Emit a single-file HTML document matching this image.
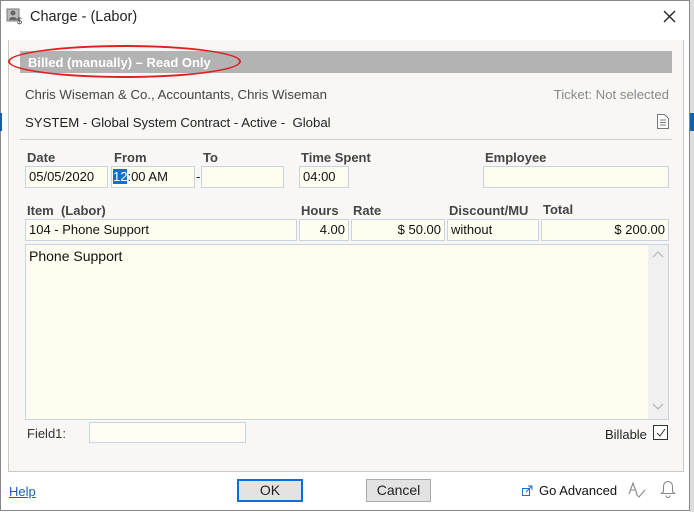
<!DOCTYPE html>
<html><head><style>
*{box-sizing:border-box;margin:0;padding:0}
body{width:694px;height:512px;overflow:hidden;background:#fff;font-family:"Liberation Sans",Arial,sans-serif;font-size:13px;color:#222;position:relative}
.a{position:absolute}
.win{left:0;top:0;width:690px;height:511px;border:1px solid #888;background:#fff}
.panel{left:8px;top:40px;width:676px;height:432px;background:#f8f7f6;border:1px solid #c8c8c8;border-top:none}
.lbl{font-weight:bold;color:#444;font-size:13px}
.in{background:#fefef0;border:1px solid #c9d3df;height:22px;line-height:20px;padding:0 3px;font-size:13px;color:#111;white-space:nowrap}
.r{text-align:right}
</style></head><body>
<div class="a" style="left:690px;top:0;width:4px;height:512px;background:#ddd"></div>
<div class="a" style="left:690px;top:113px;width:4px;height:18px;background:#1060b0"></div>
<div class="a win"></div>
<div class="a" style="left:0;top:113px;width:2px;height:18px;background:#1060b0"></div>
<svg class="a" style="left:6px;top:8px" width="17" height="17" viewBox="0 0 17 17"><rect x="1" y="1" width="12" height="12" fill="#bbb" stroke="#777"/><circle cx="7" cy="5" r="2.5" fill="#666"/><path d="M3 12c0-4 8-4 8 0z" fill="#666"/><text x="11" y="16" font-size="9" fill="#444" font-family="Liberation Sans">$</text></svg>
<div class="a" style="left:30px;top:9px;font-size:14.5px;color:#222">Charge - (Labor)</div>
<svg class="a" style="left:663px;top:10px" width="13" height="13"><path d="M1 1L12 12M12 1L1 12" stroke="#222" stroke-width="1.3"/></svg>
<div class="a panel"></div>
<div class="a" style="left:20px;top:51px;width:652px;height:22px;background:#b3b3b3;color:#fff;font-weight:bold;padding:4px 8px;font-size:13px">Billed (manually) – Read Only</div>
<div class="a" style="left:8px;top:45px;width:233px;height:33px;border:2px solid #e02020;border-radius:50%"></div>
<div class="a" style="left:25px;top:87px;color:#444;font-size:13.2px">Chris Wiseman &amp; Co., Accountants, Chris Wiseman</div>
<div class="a" style="right:25px;top:87px;color:#888;font-size:13.2px">Ticket: Not selected</div>
<div class="a" style="left:25px;top:115px;color:#222;font-size:13.2px">SYSTEM - Global System Contract - Active -&nbsp; Global</div>
<svg class="a" style="left:657px;top:114px" width="12" height="15"><path d="M.5 .5h7l4 4v10h-11z" fill="#fff" stroke="#777"/><path d="M3 6h6M3 8.5h6M3 11h6" stroke="#777"/></svg>
<div class="a" style="left:20px;top:139px;width:652px;height:1px;background:#ccc"></div>
<div class="a lbl" style="left:27px;top:150px">Date</div>
<div class="a lbl" style="left:114px;top:150px">From</div>
<div class="a lbl" style="left:203px;top:150px">To</div>
<div class="a lbl" style="left:301px;top:150px">Time Spent</div>
<div class="a lbl" style="left:485px;top:150px">Employee</div>
<div class="a in" style="left:25px;top:166px;width:83px">05/05/2020</div>
<div class="a in" style="left:111px;top:166px;width:84px;padding-left:1px"><span style="background:#0a6fd6;color:#fff">12</span>:00 AM</div>
<div class="a" style="left:196px;top:169px">-</div>
<div class="a in" style="left:201px;top:166px;width:83px"></div>
<div class="a in" style="left:299px;top:166px;width:50px">04:00</div>
<div class="a in" style="left:483px;top:166px;width:186px"></div>
<div class="a lbl" style="left:27px;top:203px">Item&nbsp; (Labor)</div>
<div class="a lbl" style="left:301px;top:203px">Hours</div>
<div class="a lbl" style="left:353px;top:203px">Rate</div>
<div class="a lbl" style="left:449px;top:203px">Discount/MU</div>
<div class="a lbl" style="left:543px;top:202px">Total</div>
<div class="a in" style="left:25px;top:219px;width:272px">104 - Phone Support</div>
<div class="a in r" style="left:299px;top:219px;width:50px">4.00</div>
<div class="a in r" style="left:351px;top:219px;width:94px">$ 50.00</div>
<div class="a in" style="left:447px;top:219px;width:92px">without</div>
<div class="a in r" style="left:541px;top:219px;width:128px">$ 200.00</div>
<div class="a in" style="left:25px;top:244px;width:644px;height:176px;line-height:22px;font-size:14px;padding-left:3px">Phone Support</div>
<div class="a" style="left:648px;top:245px;width:20px;height:174px;background:#f0f0f0"></div>
<svg class="a" style="left:652px;top:250px" width="12" height="8"><path d="M1 7l5-5 5 5" stroke="#bbb" fill="none" stroke-width="1.3"/></svg>
<svg class="a" style="left:652px;top:403px" width="12" height="8"><path d="M1 1l5 5 5-5" stroke="#bbb" fill="none" stroke-width="1.3"/></svg>
<div class="a" style="left:27px;top:426px;color:#333">Field1:</div>
<div class="a in" style="left:89px;top:422px;width:157px;height:21px;background:#fefef4"></div>
<div class="a" style="left:605px;top:427px;color:#222">Billable</div>
<div class="a" style="left:653px;top:425px;width:15px;height:15px;border:1px solid #333;background:#fff"></div>
<svg class="a" style="left:655px;top:427px" width="12" height="12"><path d="M2 6l3 3 5-7" stroke="#333" fill="none"/></svg>
<div class="a" style="left:9px;top:484px;color:#1a5fb4;text-decoration:underline">Help</div>
<div class="a" style="left:237px;top:479px;width:66px;height:23px;border:2px solid #0a6fd6;background:#e3e3e3;text-align:center;line-height:19px;font-size:14px">OK</div>
<div class="a" style="left:366px;top:479px;width:65px;height:23px;border:1px solid #aaa;background:#e3e3e3;text-align:center;line-height:21px;font-size:14px">Cancel</div>
<svg class="a" style="left:522px;top:485px" width="11" height="11"><rect x=".5" y="3.5" width="7" height="7" fill="none" stroke="#1a6fd6"/><path d="M4 7l6-6M6 1h4v4" stroke="#1a6fd6" fill="none"/></svg>
<div class="a" style="left:539px;top:483px;font-size:13px;color:#111">Go Advanced</div>
<svg class="a" style="left:628px;top:482px" width="18" height="16"><path d="M1 12l4-11 4 11M2.5 8h5M8 12l3 3 6-7" stroke="#888" fill="none" stroke-width="1.1"/></svg>
<svg class="a" style="left:660px;top:480px" width="16" height="18"><path d="M8 1.5c-3 0-4.5 2.5-4.5 5v5l-2 2h13l-2-2v-5c0-2.5-1.5-5-4.5-5zM6 15.5a2 2 0 004 0" stroke="#888" fill="none" stroke-width="1.1"/></svg>
</body></html>
